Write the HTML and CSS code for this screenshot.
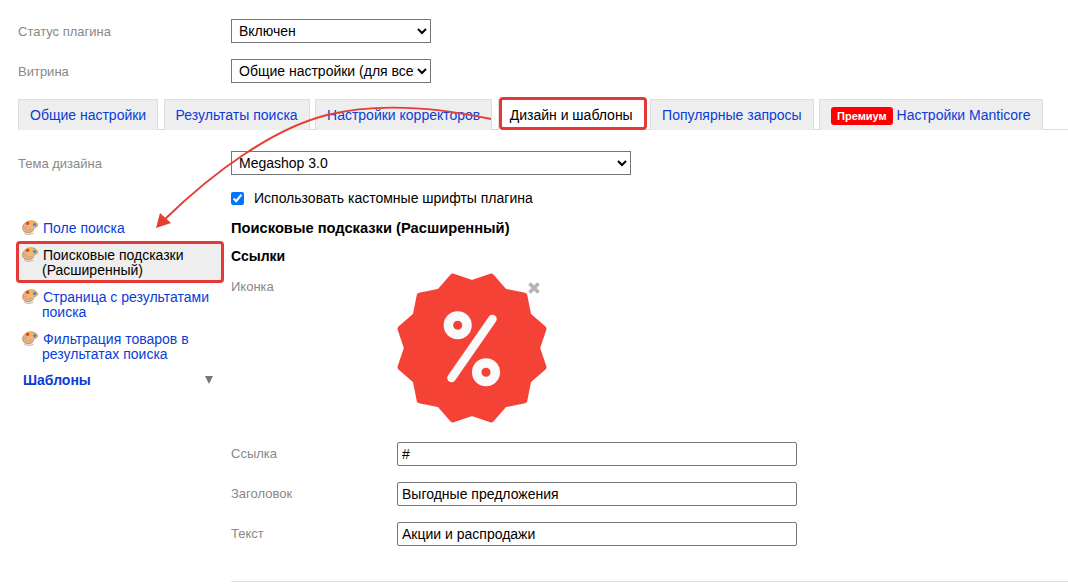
FILE: index.html
```html
<!DOCTYPE html>
<html lang="en">
<head>
  <meta charset="UTF-8" />
  <meta name="viewport" content="width=device-width, initial-scale=1" />
  <title>Настройки плагина</title>
  <link rel="stylesheet" href="styles.css">
</head>
<body>

  <svg width="0" height="0" class="defs">
    <symbol id="palette" viewBox="0 0 16 15">
      <path d="M2 13c2.500 1.700 7 1.800 9.500 0" fill="none" stroke="#c4c4c4" stroke-width="1.400"/>
      <path d="M.6 8.500C.4 5 3.500 1 8.500.8c3.800-.1 7 1.800 7 4.200 0 2-2 2.500-3.300 3-1 .4-.5 1.600-1 2.400-.9 1.500-2.800 2.300-5 2.300-3 0-5.500-1.500-5.600-4.200z" fill="#eeb57c" stroke="#b5804e" stroke-width=".7"/>
      <circle cx="5.600" cy="3.400" r="1.600" fill="#e53935"/>
      <circle cx="9.200" cy="2.600" r="1.600" fill="#f4c20d"/>
      <circle cx="12.600" cy="4.600" r="1.600" fill="#2b8fe0"/>
      <circle cx="3" cy="6.800" r="1" fill="#fff3e0" stroke="#9a6a3e" stroke-width=".5"/>
      <circle cx="4.400" cy="10" r="1" fill="#fff3e0" stroke="#9a6a3e" stroke-width=".5"/>
      <circle cx="8" cy="10.400" r="1" fill="#fff3e0" stroke="#9a6a3e" stroke-width=".5"/>
    </symbol>
  </svg>

  <div class="page">
    <div class="setting">
      <div class="setting-label">Статус плагина</div>
      <select class="select-short">
        <option>Включен</option>
        <option>Выключен</option>
      </select>
    </div>

    <div class="setting">
      <div class="setting-label">Витрина</div>
      <select class="select-short">
        <option>Общие настройки (для всех витрин)</option>
      </select>
    </div>

    <ul class="tabs">
      <li><a href="#">Общие настройки</a></li>
      <li><a href="#">Результаты поиска</a></li>
      <li><a href="#">Настройки корректоров</a></li>
      <li class="active"><a href="#">Дизайн и шаблоны</a></li>
      <li><a href="#">Популярные запросы</a></li>
      <li><a href="#"><span class="badge">Премиум</span> Настройки Manticore</a></li>
    </ul>

    <div class="content">
      <aside class="sidebar">
        <div class="theme-label">Тема дизайна</div>
        <ul class="side-nav">
          <li><svg class="palette"><use href="#palette"/></svg><a href="#">Поле поиска</a></li>
          <li class="current"><svg class="palette"><use href="#palette"/></svg><a href="#">Поисковые подсказки (Расширенный)</a></li>
          <li><svg class="palette"><use href="#palette"/></svg><a href="#">Страница с результатами поиска</a></li>
          <li><svg class="palette"><use href="#palette"/></svg><a href="#">Фильтрация товаров в результатах поиска</a></li>
        </ul>
        <div class="side-group">
          <a href="#">Шаблоны</a>
          <span class="caret"></span>
        </div>
      </aside>

      <main class="main">
        <select class="select-long">
          <option>Megashop 3.0</option>
        </select>

        <label class="check-row">
          <input type="checkbox" checked />
          <span>Использовать кастомные шрифты плагина</span>
        </label>

        <h3 class="section-title">Поисковые подсказки (Расширенный)</h3>
        <h4 class="sub-title">Ссылки</h4>

        <div class="form-row icon-row">
          <div class="row-label">Иконка</div>
          <div class="icon-box">
            <svg width="150" height="150" viewBox="0 0 150 150">
              <polygon points="75,10 94.150,3.500 107.500,18.700 127.300,22.700 131.300,42.500 146.500,55.850 140,75 146.500,94.150 131.300,107.500 127.300,127.300 107.500,131.300 94.150,146.500 75,140 55.850,146.500 42.500,131.300 22.700,127.300 18.700,107.500 3.500,94.150 10,75 3.500,55.850 18.700,42.500 22.700,22.700 42.500,18.700 55.850,3.500" fill="#f44336" stroke="#f44336" stroke-width="6" stroke-linejoin="round"/>
              <circle cx="60.700" cy="52.300" r="9.300" fill="none" stroke="#fafafa" stroke-width="9.500"/>
              <circle cx="89" cy="99.300" r="9.300" fill="none" stroke="#fafafa" stroke-width="9.500"/>
              <line x1="95.500" y1="46" x2="54.500" y2="105" stroke="#fafafa" stroke-width="8.500" stroke-linecap="round"/>
            </svg>
            <svg class="remove" width="14" height="14" viewBox="0 0 14 14">
              <path d="M2.500 2.500l9 9M11.500 2.500l-9 9" stroke="#b4b4b4" stroke-width="3.600"/>
            </svg>
          </div>
        </div>

        <div class="form-row first-input">
          <div class="row-label">Ссылка</div>
          <input type="text" value="#" />
        </div>
        <div class="form-row">
          <div class="row-label">Заголовок</div>
          <input type="text" value="Выгодные предложения" />
        </div>
        <div class="form-row">
          <div class="row-label">Текст</div>
          <input type="text" value="Акции и распродажи" />
        </div>

        <hr class="divider" />
      </main>
    </div>

    <!-- annotation arrow from the tab to the sidebar item -->
    <svg class="arrow" width="1068" height="585" viewBox="0 0 1068 585">
      <path d="M491 119C430 106 372 104 327 115 275 128 215 170 163 221" fill="none" stroke="#e53f33" stroke-width="2"/>
      <polygon points="156,228 160,213 171,223" fill="#e53f33"/>
    </svg>
  </div>

</body>
</html>
```

FILE: styles.css
```css
html, body {
  margin: 0;
  padding: 0;
  overflow: hidden;
}

body {
  font-family: "Liberation Sans", Arial, sans-serif;
  font-size: 14px;
  color: #000;
  background: #fff;
}

a {
  color: #0a3cd6;
  text-decoration: none;
}

.defs {
  position: absolute;
}

.page {
  position: relative;
  padding: 19px 0 0 18px;
}

select {
  font-family: "Liberation Sans", Arial, sans-serif;
  font-size: 14px;
  height: 24px;
  box-sizing: border-box;
  padding-left: 3px;
  background: #fff;
}

.setting {
  display: flex;
  align-items: center;
  margin-bottom: 16px;
}

.setting-label {
  width: 213px;
  font-size: 13px;
  color: #888;
}

.select-short {
  width: 200px;
}

.select-long {
  display: block;
  width: 400px;
}

.tabs {
  display: flex;
  gap: 5.400px;
  list-style: none;
  margin: 0;
  padding: 0;
  border-bottom: 1px solid #ddd;
}

.tabs li {
  position: relative;
  box-sizing: border-box;
  height: 31px;
  margin-bottom: -1px;
  padding: 0 11px;
  line-height: 31px;
  background: #eee;
  border: 1px solid #ddd;
  border-bottom: none;
  white-space: nowrap;
}

.tabs a {
  display: block;
  line-height: 31px;
}

.tabs li.active {
  background: #fff;
}

.tabs li.active a {
  color: #000;
}

.tabs li.active::after {
  content: "";
  position: absolute;
  left: 0;
  right: -3px;
  top: -3px;
  bottom: 0;
  border: 3px solid #e53935;
  border-radius: 4px;
}

.badge {
  display: inline-block;
  height: 18px;
  padding: 0 6px;
  line-height: 18px;
  font-size: 11px;
  font-weight: bold;
  color: #fff;
  background: #f00;
  border-radius: 3px;
}

.content {
  display: flex;
  padding-top: 21px;
}

.sidebar {
  flex: 0 0 213px;
}

.theme-label {
  height: 24px;
  line-height: 25px;
  font-size: 13px;
  color: #888;
}

.side-nav {
  list-style: none;
  margin: 39px 0 0 -2px;
  padding: 0;
  width: 208px;
}

.side-nav li {
  display: flex;
  gap: 5px;
  padding: 7px 10px 5px 6px;
  line-height: 15px;
  font-size: 14px;
}

.side-nav li a {
  margin-left: -1px;
  text-indent: 1px;
}

.side-nav li.current {
  background: #eee;
  border-radius: 4px;
  box-shadow: inset 0 0 0 3px #e53935;
}

.side-nav li.current a {
  color: #000;
}

.palette {
  flex: none;
  width: 16px;
  height: 15px;
  margin-top: -1px;
}

.side-group {
  display: flex;
  justify-content: space-between;
  align-items: center;
  margin: 5px 18px 0 5px;
  line-height: 16px;
  font-weight: bold;
  font-size: 14px;
}

.caret {
  width: 0;
  height: 0;
  border-left: 4.500px solid transparent;
  border-right: 4.500px solid transparent;
  border-top: 8px solid #777;
}

.main {
  flex: 1;
}

.check-row {
  display: flex;
  align-items: center;
  height: 16px;
  margin-top: 15px;
}

.check-row input {
  width: 13px;
  height: 13px;
  margin: 0 10px 0 0;
}

.section-title {
  margin: 14px 0 0;
  font-size: 14.700px;
  line-height: 16px;
}

.sub-title {
  margin: 12px 0 0;
  font-size: 14px;
  line-height: 16px;
}

.form-row {
  display: flex;
  align-items: center;
  margin-top: 16px;
}

.row-label {
  width: 166px;
  padding-bottom: 2px;
  font-size: 13px;
  color: #888;
}

.form-row input {
  width: 400px;
  height: 24px;
  box-sizing: border-box;
  padding: 1px 4px;
  border: 1px solid #767676;
  border-radius: 2px;
  font-family: "Liberation Sans", Arial, sans-serif;
  font-size: 14px;
}

.icon-row {
  align-items: flex-start;
  margin-top: 9px;
}

.icon-row .row-label {
  padding-top: 6px;
}

.icon-box {
  position: relative;
  width: 150px;
  height: 150px;
}

.icon-box svg {
  display: block;
}

.remove {
  position: absolute;
  left: 130px;
  top: 8px;
}

.first-input {
  margin-top: 19px;
}

.divider {
  margin: 35px 0 0;
  border: 0;
  border-top: 1px solid #ddd;
}

.arrow {
  position: absolute;
  left: 0;
  top: 0;
  pointer-events: none;
}
```
